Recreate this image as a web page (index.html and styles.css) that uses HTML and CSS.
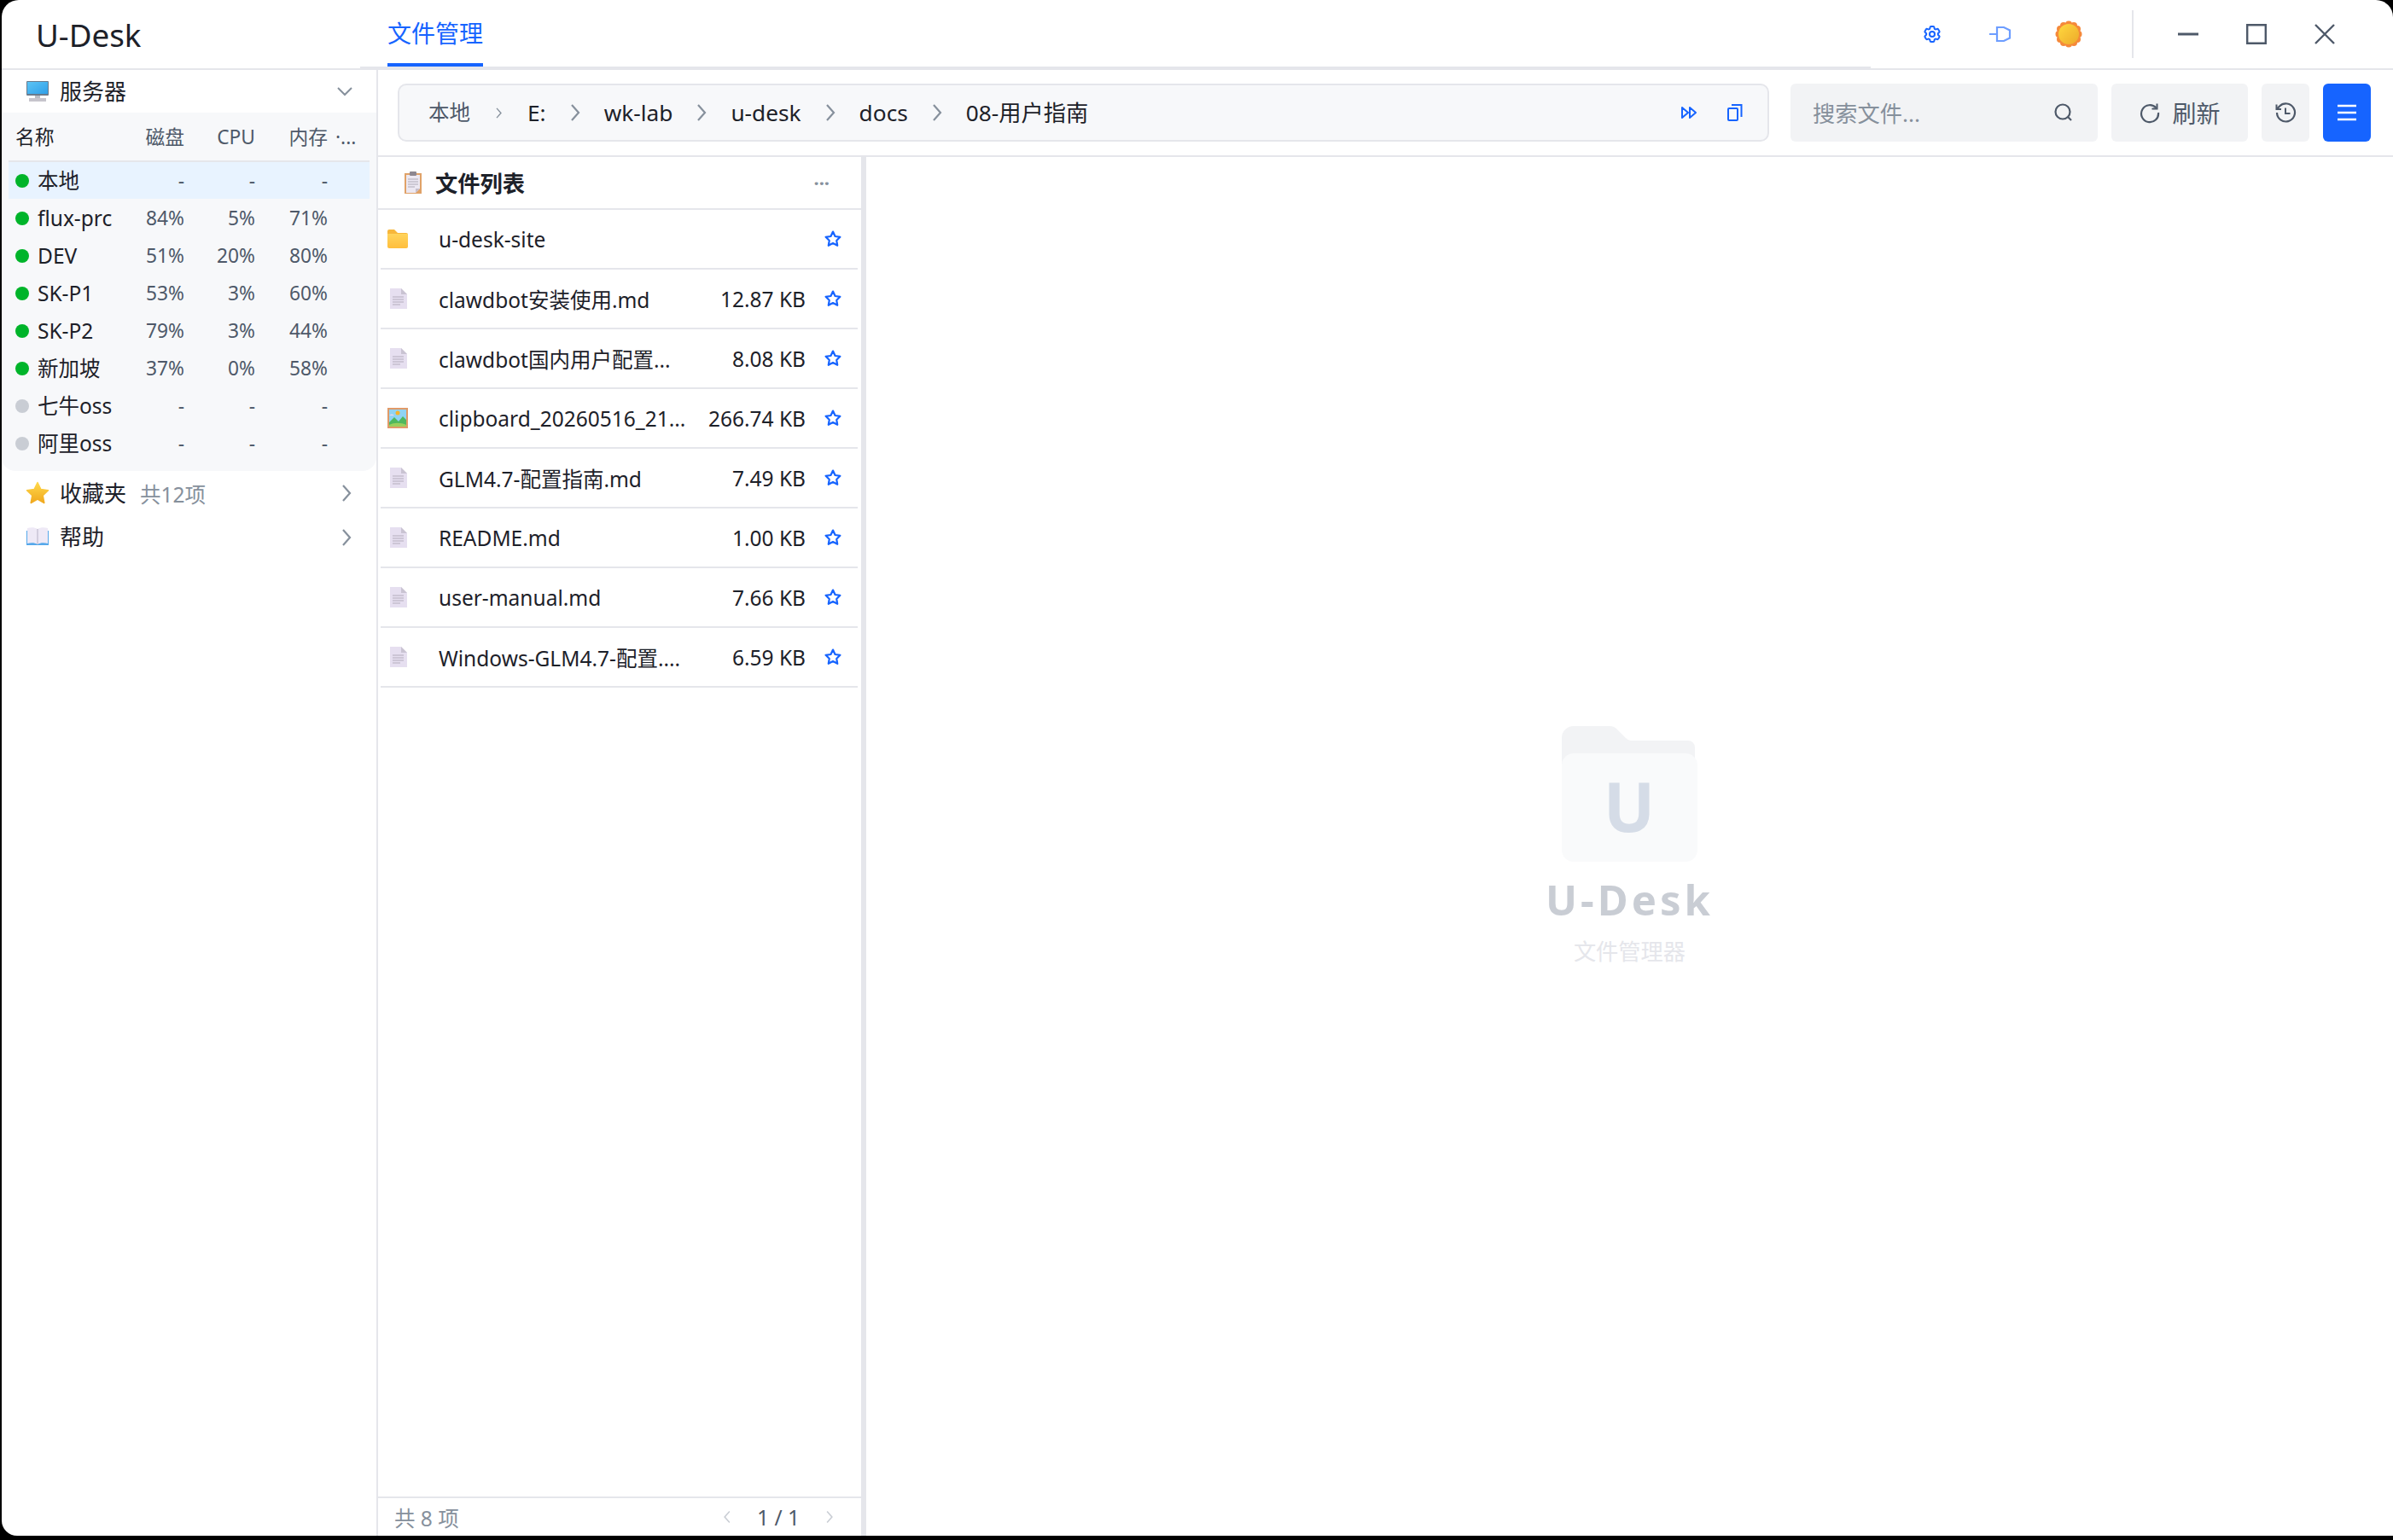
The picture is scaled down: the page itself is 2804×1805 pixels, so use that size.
FILE: index.html
```html
<!DOCTYPE html>
<html lang="zh-CN">
<head>
    <meta charset="UTF-8">
    <title>U-Desk</title>
    <link rel="stylesheet" href="styles.css">
</head>
<body>
    <svg class="defs" aria-hidden="true">
        <defs>
            <linearGradient id="g-screen" x1="0" y1="0" x2="1" y2="1"><stop offset="0" stop-color="#5cc4f5"/><stop offset="1" stop-color="#2f9fe8"/></linearGradient>
            <linearGradient id="g-star" x1="0" y1="0" x2="0" y2="1"><stop offset="0" stop-color="#ffd84a"/><stop offset="1" stop-color="#f0a81e"/></linearGradient>
            <linearGradient id="g-folder" x1="0" y1="0" x2="0" y2="1"><stop offset="0" stop-color="#ffd45c"/><stop offset="1" stop-color="#ffbe3d"/></linearGradient>
            <linearGradient id="g-sun" x1="0" y1="0" x2="1" y2="1"><stop offset="0" stop-color="#ffd93f"/><stop offset="1" stop-color="#eda92a"/></linearGradient>
            <symbol id="i-right" viewBox="0 0 14 24"><path d="M3 3l8 9-8 9" fill="none" stroke="currentColor" stroke-width="2.2"/></symbol>
            <symbol id="i-star" viewBox="0 0 24 24"><path d="M12 2.8l2.8 5.9 6.4.9-4.6 4.5 1.1 6.4-5.7-3-5.7 3 1.1-6.4-4.6-4.5 6.4-.9z" fill="none" stroke="#1664ff" stroke-width="2.4" stroke-linejoin="round"/></symbol>
            <symbol id="i-doc" viewBox="0 0 20 24">
                <path d="M0 0h13l7 7v17H0z" fill="#e6dff0"/>
                <path d="M13 0l7 7h-7z" fill="#c9c3d2"/>
                <path d="M3 10h13M3 13h13M3 16h13M3 19h9" stroke="#b3aebb" stroke-width="1.2"/>
            </symbol>
        </defs>
    </svg>

    <div class="window">
        <header class="titlebar">
            <div class="brand">U-Desk</div>
            <nav class="tabs"><a class="tab">文件管理</a></nav>
            <div class="actions">
                <span class="act">
                    <svg class="ic-24" viewBox="0 0 24 24" fill="none" stroke="#1664ff" stroke-width="2"><path d="M9.594 3.94c.09-.542.56-.94 1.11-.94h2.593c.55 0 1.02.398 1.11.94l.213 1.281c.063.374.313.686.645.87.074.04.147.083.22.127.325.196.72.257 1.075.124l1.217-.456a1.125 1.125 0 0 1 1.37.49l1.296 2.247a1.125 1.125 0 0 1-.26 1.431l-1.003.827c-.293.241-.438.613-.43.992a7.723 7.723 0 0 1 0 .255c-.008.378.137.75.43.991l1.004.827c.424.35.534.955.26 1.43l-1.298 2.247a1.125 1.125 0 0 1-1.369.491l-1.217-.456c-.355-.133-.75-.072-1.076.124a6.47 6.47 0 0 1-.22.128c-.331.183-.581.495-.644.869l-.213 1.281c-.09.543-.56.94-1.11.94h-2.594c-.55 0-1.019-.398-1.11-.94l-.213-1.281c-.062-.374-.312-.686-.644-.87a6.52 6.52 0 0 1-.22-.127c-.325-.196-.72-.257-1.076-.124l-1.217.456a1.125 1.125 0 0 1-1.369-.49l-1.297-2.247a1.125 1.125 0 0 1 .26-1.431l1.004-.827c.292-.24.437-.613.43-.991a6.932 6.932 0 0 1 0-.255c.007-.38-.138-.751-.43-.992l-1.004-.827a1.125 1.125 0 0 1-.26-1.43l1.297-2.247a1.125 1.125 0 0 1 1.37-.491l1.216.456c.356.133.751.072 1.076-.124.072-.044.146-.086.22-.128.332-.183.582-.495.644-.869l.214-1.28Z"/><circle cx="12" cy="12" r="3"/></svg>
                </span>
                <span class="act">
                    <svg class="ic-26" viewBox="0 0 26 26" fill="none" stroke="#6d9dff" stroke-width="2.2"><path d="M0 13h9M9 5h8l7 3.5v9L17 21H9z"/></svg>
                </span>
                <span class="act">
                    <svg class="ic-32" viewBox="0 0 32 32">
                        <g fill="#f5893a">
                            <circle cx="16" cy="4.5" r="4"/><circle cx="22" cy="6" r="4"/><circle cx="26" cy="10" r="4"/><circle cx="27.5" cy="16" r="4"/><circle cx="26" cy="22" r="4"/><circle cx="22" cy="26" r="4"/><circle cx="16" cy="27.5" r="4"/><circle cx="10" cy="26" r="4"/><circle cx="6" cy="22" r="4"/><circle cx="4.5" cy="16" r="4"/><circle cx="6" cy="10" r="4"/><circle cx="10" cy="6" r="4"/>
                        </g>
                        <circle cx="16" cy="16" r="12" fill="url(#g-sun)"/>
                    </svg>
                </span>
                <span class="vdiv"></span>
                <span class="act win">
                    <svg class="ic-24" viewBox="0 0 24 24"><path d="M0 12h24" stroke="#4e5969" stroke-width="3"/></svg>
                </span>
                <span class="act win">
                    <svg class="ic-24" viewBox="0 0 24 24"><path d="M1.2 1.2h21.6v21.6H1.2z" fill="none" stroke="#4e5969" stroke-width="2.4"/></svg>
                </span>
                <span class="act win">
                    <svg class="ic-24" viewBox="0 0 24 24"><path d="M1 1l22 22M23 1L1 23" stroke="#4e5969" stroke-width="2.4"/></svg>
                </span>
            </div>
        </header>

        <div class="body">
            <aside class="sidebar">
                <div class="section">
                    <svg class="sec-icon" viewBox="0 0 28 28">
                        <rect x="1" y="2" width="26" height="17" rx="1" fill="#6a7b8c"/>
                        <rect x="2" y="3" width="24" height="14" fill="url(#g-screen)"/>
                        <rect x="11" y="19" width="6" height="3" fill="#b9bcc4"/>
                        <rect x="4" y="22" width="20" height="4" fill="#c6c4cc"/>
                    </svg>
                    <span class="sec-title">服务器</span>
                    <svg class="sec-arrow" viewBox="0 0 18 18"><path d="M1 5l8 8 8-8" fill="none" stroke="#86909c" stroke-width="2"/></svg>
                </div>
                <div class="servers">
                    <div class="srv-head">
                        <span>名称</span><span class="num">磁盘</span><span class="num">CPU</span><span class="num">内存</span><span class="more">·...</span>
                    </div>
                    <div class="srv selected"><span class="name"><i class="dot"></i>本地</span><span class="num">-</span><span class="num">-</span><span class="num">-</span></div>
                    <div class="srv"><span class="name"><i class="dot"></i>flux-prc</span><span class="num">84%</span><span class="num">5%</span><span class="num">71%</span></div>
                    <div class="srv"><span class="name"><i class="dot"></i>DEV</span><span class="num">51%</span><span class="num">20%</span><span class="num">80%</span></div>
                    <div class="srv"><span class="name"><i class="dot"></i>SK-P1</span><span class="num">53%</span><span class="num">3%</span><span class="num">60%</span></div>
                    <div class="srv"><span class="name"><i class="dot"></i>SK-P2</span><span class="num">79%</span><span class="num">3%</span><span class="num">44%</span></div>
                    <div class="srv"><span class="name"><i class="dot"></i>新加坡</span><span class="num">37%</span><span class="num">0%</span><span class="num">58%</span></div>
                    <div class="srv"><span class="name"><i class="dot off"></i>七牛oss</span><span class="num">-</span><span class="num">-</span><span class="num">-</span></div>
                    <div class="srv"><span class="name"><i class="dot off"></i>阿里oss</span><span class="num">-</span><span class="num">-</span><span class="num">-</span></div>
                </div>
                <div class="section fav">
                    <svg class="sec-icon" viewBox="0 0 28 28"><path d="M14 1.5l3.9 8 8.6 1.2-6.3 6 1.6 8.8L14 21.2 6.200 25.500l1.600-8.800-6.300-6 8.600-1.200z" fill="url(#g-star)" stroke="url(#g-star)" stroke-width="1.500" stroke-linejoin="round"/></svg>
                    <span class="sec-title">收藏夹</span>
                    <span class="sec-note">共12项</span>
                    <svg class="sec-chev"><use href="#i-right"/></svg>
                </div>
                <div class="section help">
                    <svg class="sec-icon" viewBox="0 0 28 28">
                        <path d="M1 7h26v17H1z" fill="#56a8ea"/>
                        <path d="M2 4c4-1 9-1 12 1 3-2 8-2 12-1v18c-4-1-9-1-12 1-3-2-8-2-12-1z" fill="#eee9f6"/>
                        <path d="M14 5v18" stroke="#c9c3d6" stroke-width="1.500"/>
                    </svg>
                    <span class="sec-title">帮助</span>
                    <svg class="sec-chev"><use href="#i-right"/></svg>
                </div>
            </aside>

            <main class="main">
                <div class="toolbar">
                    <div class="crumbs">
                        <span class="crumb first">本地</span>
                        <svg class="sep small"><use href="#i-right"/></svg>
                        <span class="crumb">E:</span>
                        <svg class="sep"><use href="#i-right"/></svg>
                        <span class="crumb">wk-lab</span>
                        <svg class="sep"><use href="#i-right"/></svg>
                        <span class="crumb">u-desk</span>
                        <svg class="sep"><use href="#i-right"/></svg>
                        <span class="crumb">docs</span>
                        <svg class="sep"><use href="#i-right"/></svg>
                        <span class="crumb">08-用户指南</span>
                        <span class="crumb-tools">
                            <svg class="ic-20" viewBox="0 0 20 20" fill="none" stroke="#1664ff" stroke-width="2" stroke-linejoin="round"><path d="M2 4l7 6-7 6zM11 4l7 6-7 6z"/></svg>
                            <svg class="ic-20" viewBox="0 0 20 20" fill="none" stroke="#1664ff" stroke-width="2"><rect x="2" y="5" width="11" height="14" rx="1"/><path d="M6 1h11.500v14"/></svg>
                        </span>
                    </div>
                    <div class="search">
                        <span class="placeholder">搜索文件...</span>
                        <svg class="ic-26" viewBox="0 0 26 26" fill="none" stroke="#4e5969" stroke-width="2.200"><circle cx="12" cy="12" r="8.500"/><path d="M18 18l4 4"/></svg>
                    </div>
                    <div class="btn refresh">
                        <svg class="ic-26" viewBox="0 0 26 26" fill="none" stroke="#4e5969" stroke-width="2.200"><path d="M20.500 7.500A10 10 0 1 0 23 13"/><path d="M21.500 2.500v6h-6" stroke-width="2"/></svg>
                        <span>刷新</span>
                    </div>
                    <div class="btn square">
                        <svg class="ic-26" viewBox="0 0 26 26" fill="none" stroke="#4e5969" stroke-width="2.200"><path d="M3 13a10.500 10.500 0 1 0 3-7.400L2.500 9"/><path d="M2.500 3.500V9H8" stroke-width="2"/><path d="M13 7.500V14h5.500" stroke-width="2"/></svg>
                    </div>
                    <div class="btn square primary">
                        <svg class="ic-24" viewBox="0 0 24 24"><path d="M1 4h22M1 12h22M1 20h22" stroke="#fff" stroke-width="2.600"/></svg>
                    </div>
                </div>

                <div class="content">
                    <section class="files">
                        <div class="files-title">
                            <svg class="clip" viewBox="0 0 20 26">
                                <rect x="0" y="2" width="20" height="24" fill="#e0a268"/>
                                <path d="M2 4h16v16l-5 5H2z" fill="#ece8f2"/>
                                <path d="M18 20l-5 5v-5z" fill="#c6bfcc"/>
                                <rect x="6" y="0" width="8" height="5" rx="1" fill="#8d8790"/>
                                <path d="M4 9h12M4 12h12M4 15h12M4 18h8" stroke="#aea9b6" stroke-width="1.200"/>
                            </svg>
                            <span>文件列表</span>
                            <span class="dots">···</span>
                        </div>
                        <div class="rows">
                            <div class="row">
                                <span class="ficon"><svg class="folder" viewBox="0 0 24 22"><path d="M0 2a2 2 0 0 1 2-2h6l4 4h10a2 2 0 0 1 2 2v2H0z" fill="#f7b73b"/><path d="M0 5h24v15a2 2 0 0 1-2 2H2a2 2 0 0 1-2-2z" fill="url(#g-folder)"/></svg></span>
                                <span class="fname">u-desk-site</span>
                                <svg class="star"><use href="#i-star"/></svg>
                            </div>
                            <div class="row">
                                <span class="ficon"><svg class="doc"><use href="#i-doc"/></svg></span>
                                <span class="fname">clawdbot安装使用.md</span>
                                <span class="fsize">12.87 KB</span>
                                <svg class="star"><use href="#i-star"/></svg>
                            </div>
                            <div class="row">
                                <span class="ficon"><svg class="doc"><use href="#i-doc"/></svg></span>
                                <span class="fname">clawdbot国内用户配置...</span>
                                <span class="fsize">8.08 KB</span>
                                <svg class="star"><use href="#i-star"/></svg>
                            </div>
                            <div class="row">
                                <span class="ficon">
                                    <svg class="folder pic" viewBox="0 0 24 24">
                                        <rect width="24" height="24" fill="#e09a68"/>
                                        <rect x="2" y="2" width="20" height="20" fill="#8fd3f4"/>
                                        <circle cx="12" cy="6" r="2.500" fill="#f5b32e"/>
                                        <path d="M2 9c2-2 4-2 6 0H2z" fill="#f3d9ea"/>
                                        <path d="M2 17l6-6 5 5 5-6 4 4v8H2z" fill="#4fb85e"/>
                                        <path d="M2 20c6-3 14-3 20 0v2H2z" fill="#9bcf5d"/>
                                    </svg>
                                </span>
                                <span class="fname">clipboard_20260516_21...</span>
                                <span class="fsize">266.74 KB</span>
                                <svg class="star"><use href="#i-star"/></svg>
                            </div>
                            <div class="row">
                                <span class="ficon"><svg class="doc"><use href="#i-doc"/></svg></span>
                                <span class="fname">GLM4.7-配置指南.md</span>
                                <span class="fsize">7.49 KB</span>
                                <svg class="star"><use href="#i-star"/></svg>
                            </div>
                            <div class="row">
                                <span class="ficon"><svg class="doc"><use href="#i-doc"/></svg></span>
                                <span class="fname">README.md</span>
                                <span class="fsize">1.00 KB</span>
                                <svg class="star"><use href="#i-star"/></svg>
                            </div>
                            <div class="row">
                                <span class="ficon"><svg class="doc"><use href="#i-doc"/></svg></span>
                                <span class="fname">user-manual.md</span>
                                <span class="fsize">7.66 KB</span>
                                <svg class="star"><use href="#i-star"/></svg>
                            </div>
                            <div class="row">
                                <span class="ficon"><svg class="doc"><use href="#i-doc"/></svg></span>
                                <span class="fname">Windows-GLM4.7-配置....</span>
                                <span class="fsize">6.59 KB</span>
                                <svg class="star"><use href="#i-star"/></svg>
                            </div>
                        </div>
                        <div class="files-foot">
                            <span class="total">共 8 项</span>
                            <span class="pager">
                                <svg class="pg flip"><use href="#i-right"/></svg>
                                <span class="pg-text">1 / 1</span>
                                <svg class="pg"><use href="#i-right"/></svg>
                            </span>
                        </div>
                    </section>

                    <section class="empty">
                        <svg class="empty-folder" viewBox="0 0 160 160">
                            <path d="M0 14a14 14 0 0 1 14-14h42a12 12 0 0 1 9 4l10 10a8 8 0 0 0 6 3h67a8 8 0 0 1 8 8v40H0z" fill="#f2f3f5"/>
                            <rect x="0" y="32" width="159" height="127" rx="14" fill="#f9fafb"/>
                            <text class="empty-u" x="79" y="124" text-anchor="middle">U</text>
                        </svg>
                        <div class="empty-name">U-Desk</div>
                        <div class="empty-sub">文件管理器</div>
                    </section>
                </div>
            </main>
        </div>
    </div>
</body>
</html>
```

FILE: styles.css
```css
* {
    box-sizing: border-box;
}
html, body {
    margin: 0;
    height: 100%;
    background: #000;
    overflow: hidden;
}
body {
    font-family: "Noto Sans", "Noto Sans CJK SC", sans-serif;
    font-size: 24.5px;
    color: #1d2129;
}
svg {
    display: block;
    flex: none;
}
.defs {
    position: absolute;
    width: 0;
    height: 0;
}
.ic-20 { width: 20px; height: 20px; }
.ic-24 { width: 24px; height: 24px; }
.ic-26 { width: 26px; height: 26px; }
.ic-32 { width: 32px; height: 32px; }

.window {
    margin-left: 2px;
    width: 2802px;
    height: 1800px;
    background: #fff;
    border-radius: 20px 20px 0 18px;
    overflow: hidden;
    display: flex;
    flex-direction: column;
}

/* title bar */
.titlebar {
    height: 82px;
    flex: none;
    display: flex;
    border-bottom: 2px solid #e5e6eb;
}
.brand {
    width: 420px;
    padding: 16px 0 0 40px;
    font-size: 36.75px;
    line-height: 50px;
}
.tabs {
    width: 1770px;
    height: 80px;
    padding-left: 32px;
    border-bottom: 2px solid #e5e6eb;
}
.tab {
    display: block;
    width: 112px;
    height: 78px;
    padding-top: 20px;
    font-size: 28px;
    line-height: 38px;
    color: #1664ff;
    border-bottom: 4px solid #1664ff;
}
.actions {
    display: flex;
    align-items: center;
    padding-left: 32px;
    flex: 1;
}
.act {
    width: 80px;
    height: 80px;
    display: flex;
    align-items: center;
    justify-content: center;
}
.vdiv {
    width: 2px;
    height: 56px;
    margin: 0 24px 0 34px;
    background: #e5e6eb;
}

/* sidebar */
.body {
    flex: 1;
    display: flex;
    min-height: 0;
}
.sidebar {
    width: 441px;
    flex: none;
    border-right: 2px solid #e5e6eb;
}
.section {
    height: 50px;
    display: flex;
    align-items: center;
    padding: 0 0 0 28px;
    position: relative;
}
.section.fav {
    height: 52px;
}
.sec-icon {
    width: 28px;
    height: 28px;
    margin-right: 12px;
}
.sec-title {
    font-size: 26px;
    line-height: 36px;
}
.sec-note {
    margin-left: 16px;
    font-size: 24.5px;
    color: #86909c;
}
.sec-arrow {
    position: absolute;
    right: 28px;
    top: 16px;
    width: 18px;
    height: 18px;
}
.sec-chev {
    position: absolute;
    right: 28px;
    top: 14px;
    width: 14px;
    height: 24px;
    color: #86909c;
}
.section.help {
    margin-top: 0;
}
.servers {
    height: 420px;
    padding: 0 8px;
    background: #f7f8fa;
    border-radius: 0 0 16px 16px;
}
.srv-head, .srv {
    display: grid;
    grid-template-columns: 114px 84px 83px 85px 1fr;
    align-items: center;
    padding-left: 8px;
    font-size: 22.75px;
    line-height: 30px;
}
.srv-head {
    height: 58px;
    color: #4e5969;
    border-bottom: 2px solid #e5e6eb;
    padding-top: 2px;
}
.srv-head > span:first-child {
    color: #1d2129;
}
.srv-head .more {
    padding-left: 9px;
    white-space: nowrap;
}
.srv {
    height: 44px;
    color: #4e5969;
}
.srv.selected {
    background: #e8f3ff;
    height: 43px;
    margin-bottom: 1px;
}
.num {
    text-align: right;
}
.name {
    display: flex;
    align-items: center;
    overflow: hidden;
    white-space: nowrap;
    color: #1d2129;
    font-size: 24.5px;
}
.dot {
    width: 16px;
    height: 16px;
    flex: none;
    margin-right: 10px;
    border-radius: 50%;
    background: #00b42a;
}
.dot.off {
    background: #c9cdd4;
}

/* toolbar */
.main {
    flex: 1;
    display: flex;
    flex-direction: column;
    min-width: 0;
}
.toolbar {
    height: 102px;
    flex: none;
    display: flex;
    align-items: center;
    gap: 16px;
    padding: 0 26px 0 23px;
    border-bottom: 2px solid #e5e6eb;
}
.crumbs {
    width: 1607px;
    height: 68px;
    margin-right: 9px;
    display: flex;
    align-items: center;
    gap: 27px;
    padding: 0 0 0 34px;
    background: #f7f8fa;
    border: 2px solid #e5e6eb;
    border-radius: 10px;
}
.crumb {
    font-size: 26.25px;
    line-height: 36px;
    white-space: nowrap;
}
.crumb.first {
    font-size: 24.5px;
    color: #4e5969;
}
.sep {
    width: 14px;
    height: 24px;
    color: #86909c;
}
.sep.small {
    width: 9px;
    height: 15px;
    margin: 0 2px;
}
.crumb-tools {
    margin-left: auto;
    display: flex;
    gap: 34px;
    padding-right: 28px;
}
.search {
    width: 360px;
    height: 68px;
    display: flex;
    align-items: center;
    justify-content: space-between;
    padding: 0 27px 0 26px;
    background: #f2f3f5;
    border-radius: 6px;
}
.placeholder {
    font-size: 26.25px;
    color: #86909c;
}
.btn {
    height: 68px;
    display: flex;
    align-items: center;
    justify-content: center;
    background: #f2f3f5;
    border-radius: 6px;
    color: #4e5969;
}
.refresh {
    width: 160px;
    gap: 13px;
    font-size: 28px;
}
.square {
    width: 56px;
}
.primary {
    background: #1664ff;
}

/* file list */
.content {
    flex: 1;
    display: flex;
    min-height: 0;
}
.files {
    width: 572px;
    flex: none;
    display: flex;
    flex-direction: column;
    border-right: 6px solid #e5e6eb;
}
.files-title {
    height: 62px;
    flex: none;
    display: flex;
    align-items: center;
    padding: 0 37px 0 31px;
    border-bottom: 2px solid #e5e6eb;
    font-size: 26.25px;
    font-weight: 700;
}
.clip {
    width: 20px;
    height: 26px;
    margin-right: 16px;
}
.dots {
    margin-left: auto;
    font-weight: 700;
    font-size: 22px;
    letter-spacing: 0;
    color: #86909c;
}
.rows {
    flex: 1;
    padding: 0 4px 0 3px;
}
.row {
    height: 70px;
    display: flex;
    align-items: center;
    border-bottom: 2px solid #e5e6eb;
}
.ficon {
    width: 68px;
    flex: none;
    padding-left: 8px;
}
.folder {
    width: 24px;
    height: 22px;
}
.folder.pic {
    height: 24px;
}
.doc {
    width: 20px;
    height: 24px;
    margin-left: 3px;
}
.fname {
    flex: 1;
    white-space: nowrap;
}
.fsize {
    white-space: nowrap;
    color: #1d2129;
}
.star {
    width: 22px;
    height: 22px;
    margin: 0 18px 0 21px;
}
.files-foot {
    height: 46px;
    flex: none;
    display: flex;
    align-items: center;
    justify-content: space-between;
    padding: 0 32px 0 19px;
    border-top: 2px solid #e5e6eb;
    margin-bottom: 0;
}
.total {
    color: #86909c;
    font-size: 24.5px;
}
.pager {
    display: flex;
    align-items: center;
    gap: 30px;
}
.pg-text {
    color: #4e5969;
}
.pg {
    width: 10px;
    height: 18px;
    color: #c9cdd4;
}
.pg.flip {
    transform: scaleX(-1);
}

/* empty state */
.empty {
    flex: 1;
    display: flex;
    flex-direction: column;
    align-items: center;
    justify-content: center;
}
.empty-folder {
    width: 160px;
    height: 160px;
}
.empty-u {
    font-family: "Noto Sans", sans-serif;
    font-size: 80px;
    font-weight: 700;
    fill: #d5dce7;
}
.empty-name {
    margin-top: 10px;
    font-size: 49px;
    line-height: 66px;
    font-weight: 700;
    letter-spacing: 4px;
    color: #c9cdd4;
}
.empty-sub {
    margin-top: 10px;
    font-size: 26.25px;
    line-height: 36px;
    color: #e5e6eb;
}
```
